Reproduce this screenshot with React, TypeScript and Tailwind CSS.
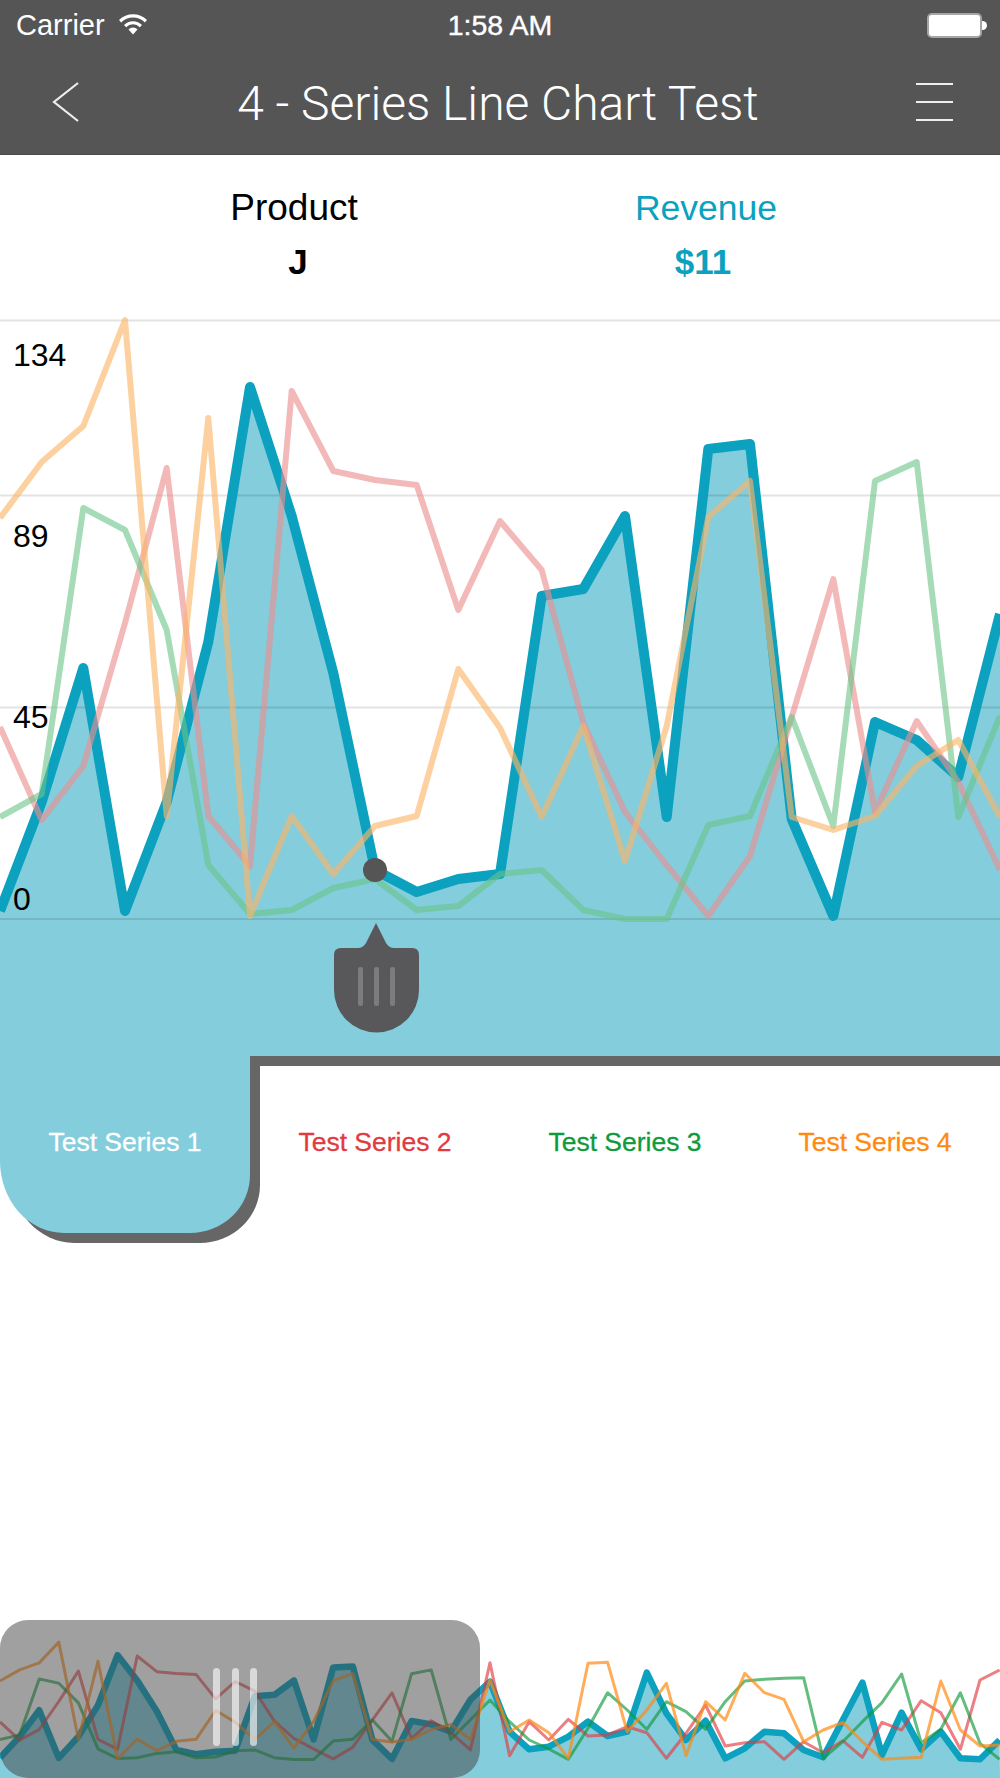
import React from "react";

const X = 1000 / 24;
const blue = [911, 802, 668, 911, 802, 642, 387, 516, 673, 870, 892, 879, 874, 596, 589, 516, 817, 449, 444, 819, 916, 722, 740, 777, 614];
const red = [727, 820, 766, 623, 468, 816, 866, 391, 471, 480, 485, 610, 521, 570, 723, 812, 865, 916, 856, 717, 579, 812, 721, 782, 870];
const green = [817, 794, 508, 530, 630, 865, 914, 910, 888, 879, 910, 906, 874, 870, 910, 919, 919, 825, 816, 717, 826, 481, 462, 817, 716];
const orange = [518, 462, 426, 320, 816, 418, 916, 816, 874, 826, 816, 669, 728, 817, 726, 861, 726, 517, 481, 817, 830, 816, 766, 740, 817];

const blueM = [245, 395, 448, 440, 410, 365, 408, 395, 218, 340, 420, 362, 475, 445, 395, 400, 450, 472, 360, 248, 465, 338, 448, 395, 475, 478, 420];
const redM = [188, 467, 365, 420, 358, 408, 405, 380, 398, 475, 400, 315, 438, 428, 425, 478, 425, 458, 422, 472, 367, 390, 302, 338, 448, 240, 210];
const greenM = [300, 365, 420, 447, 478, 385, 278, 330, 388, 305, 335, 388, 305, 243, 238, 235, 233, 475, 425, 365, 308, 222, 428, 388, 278, 430, 478];
const orangeM = [240, 395, 360, 398, 475, 190, 187, 395, 330, 250, 467, 305, 360, 220, 278, 298, 425, 390, 367, 425, 478, 475, 472, 243, 390, 438, 435];

const main = (d: number[]) => d.map((y, i) => `${(i * X).toFixed(1)},${y}`).join(" ");
const mini = (d: number[], ext: number[]) =>
  [...d.map((y) => 1759.5 - (919 - y) * 0.196), ...ext.map((z) => 1600 + z / 3)]
    .map((y, i) => `${(i * 19.6).toFixed(1)},${y.toFixed(1)}`)
    .join(" ");

function Wifi() {
  return (
    <svg width="30" height="22" viewBox="0 0 30 22" className="ml-[13px] mt-[-3px]">
      <path d="M1 7 A20 20 0 0 1 29 7 L26.8 9.4 A16.5 16.5 0 0 0 3.2 9.4 Z" fill="#fff" />
      <path d="M6 12 A12.5 12.5 0 0 1 24 12 L21.8 14.3 A9.2 9.2 0 0 0 8.2 14.3 Z" fill="#fff" />
      <path d="M10.5 16.6 A6 6 0 0 1 19.5 16.6 L15 21.5 Z" fill="#fff" />
    </svg>
  );
}

function ChartSvg() {
  return (
    <svg viewBox="0 320 1000 736" width="1000" height="736" className="block overflow-visible">
      <polygon points={`0,1056 ${main(blue)} 1000,1056`} fill="#83cddd" />
      {[320.5, 495.5, 707.5, 919].map((y) => (
        <line key={y} x1="0" x2="1000" y1={y} y2={y} stroke="#000" strokeOpacity="0.11" strokeWidth="2" />
      ))}
      <polyline points={main(blue)} fill="none" stroke="#0ba1bf" strokeWidth="10" strokeLinejoin="round" />
      <polyline points={main(red)} fill="none" stroke="#ec8e8e" strokeOpacity="0.62" strokeWidth="6" strokeLinejoin="round" />
      <polyline points={main(green)} fill="none" stroke="#69c587" strokeOpacity="0.6" strokeWidth="6" strokeLinejoin="round" />
      <polyline points={main(orange)} fill="none" stroke="#fcb567" strokeOpacity="0.63" strokeWidth="6" strokeLinejoin="round" />
      <circle cx="375" cy="870" r="12" fill="#555555" />
      <path d="M376 923 L386 943 Q389 948 394 948 L412 948 Q419 948 419 955 L419 990 A42.5 42.5 0 0 1 334 990 L334 955 Q334 948 341 948 L358 948 Q363 948 366 943 Z" fill="#58585a" />
      <rect x="358" y="967" width="5" height="39" rx="2" fill="#7c7c7e" />
      <rect x="374" y="967" width="5" height="39" rx="2" fill="#7c7c7e" />
      <rect x="390" y="967" width="5" height="39" rx="2" fill="#7c7c7e" />
    </svg>
  );
}

export default function App() {
  return (
    <div className="w-[1000px] h-[1778px] bg-white flex flex-col overflow-hidden font-['Liberation_Sans',Arial,sans-serif]">
      <header className="h-[155px] shrink-0 bg-[#555555] border-b border-[#4a4a4a] text-white flex flex-col">
        <div className="h-[50px] px-4 flex items-center relative">
          <span className="text-[29px] leading-none mt-[1px]">Carrier</span>
          <Wifi />
          <span className="absolute left-0 right-0 text-center text-[28.5px] leading-none mt-[1px] [-webkit-text-stroke:0.4px_#fff]">1:58 AM</span>
          <div className="ml-auto mr-[-3px] flex items-center">
            <div className="w-[55px] h-[25px] rounded-[5px] bg-white border-2 border-[#a5a5a5]" />
            <div className="w-[5px] h-[9px] bg-white rounded-r-full" />
          </div>
        </div>
        <div className="flex-1 flex items-center justify-between pl-[52px] pr-[47px]">
          <svg width="28" height="40" viewBox="0 0 28 40">
            <path d="M26 1 L2 20 L26 39" fill="none" stroke="#fff" strokeOpacity="0.9" strokeWidth="2.2" />
          </svg>
          <h1 className="font-['Roboto',sans-serif] font-light text-[48px] leading-none mt-[3px]">4 - Series Line Chart Test</h1>
          <div className="w-[37px] flex flex-col gap-[16px]">
            <div className="h-[2px] bg-white/90" />
            <div className="h-[2px] bg-white/90" />
            <div className="h-[2px] bg-white/90" />
          </div>
        </div>
      </header>

      <section className="h-[165px] shrink-0 flex justify-center pt-[32px]">
        <div className="w-[412px] text-center text-black">
          <div className="text-[37px] leading-[42px]">Product</div>
          <div className="text-[35px] leading-[42px] font-bold mt-[12px] pl-[8px]">J</div>
        </div>
        <div className="w-[412px] text-center text-[#0ba1bf]">
          <div className="text-[35.5px] leading-[42px]">Revenue</div>
          <div className="text-[35px] leading-[42px] font-bold mt-[12px] pr-[6px]">$11</div>
        </div>
      </section>

      <section className="relative h-[736px] shrink-0">
        <ChartSvg />
        <span className="absolute left-[13px] top-[19px] text-[32px] leading-none text-black">134</span>
        <span className="absolute left-[13px] top-[200px] text-[32px] leading-none text-black">89</span>
        <span className="absolute left-[13px] top-[381px] text-[32px] leading-none text-black">45</span>
        <span className="absolute left-[13px] top-[563px] text-[32px] leading-none text-black">0</span>
      </section>

      <section className="flex shrink-0 h-[187px] items-start">
        <div className="relative z-10 w-[250px] h-[177px] bg-[#83cddd] rounded-bl-[64px_72px] rounded-br-[60px_58px] shadow-[10px_10px_0_0_#666666] text-white text-[26.5px] text-center pt-[69px] leading-[34px] [-webkit-text-stroke:0.3px_#fff]">
          Test Series 1
        </div>
        <div className="flex-1 h-[177px] border-t-[10px] border-[#666666] grid grid-cols-3 text-[26.5px] text-center pt-[59px] leading-[34px]">
          <span className="text-[#e23a3f] [-webkit-text-stroke:0.3px_#e23a3f]">Test Series 2</span>
          <span className="text-[#0f9a3b] [-webkit-text-stroke:0.3px_#0f9a3b]">Test Series 3</span>
          <span className="text-[#ff8a12] [-webkit-text-stroke:0.3px_#ff8a12]">Test Series 4</span>
        </div>
      </section>

      <section className="relative mt-auto h-[158px] shrink-0">
        <svg viewBox="0 1620 1000 158" width="1000" height="158" className="block">
          <polygon points={`0,1778 ${mini(blue, blueM)} 1000,1778`} fill="#83cddd" />
          <polyline points={mini(blue, blueM)} fill="none" stroke="#0ba1bf" strokeWidth="6.5" strokeLinejoin="round" />
          <polyline points={mini(red, redM)} fill="none" stroke="#e23a3f" strokeOpacity="0.65" strokeWidth="3" strokeLinejoin="round" />
          <polyline points={mini(green, greenM)} fill="none" stroke="#0f9a3b" strokeOpacity="0.65" strokeWidth="3" strokeLinejoin="round" />
          <polyline points={mini(orange, orangeM)} fill="none" stroke="#ff8a12" strokeOpacity="0.7" strokeWidth="3" strokeLinejoin="round" />
        </svg>
        <div className="absolute left-0 top-0 bottom-0 w-[480px] rounded-[28px] bg-[#414141]/50 flex items-start justify-center gap-[11.5px] pt-[48px] pr-[10px]">
          <div className="w-[7px] h-[78px] rounded-full bg-white/60" />
          <div className="w-[7px] h-[78px] rounded-full bg-white/60" />
          <div className="w-[7px] h-[78px] rounded-full bg-white/60" />
        </div>
      </section>
    </div>
  );
}
